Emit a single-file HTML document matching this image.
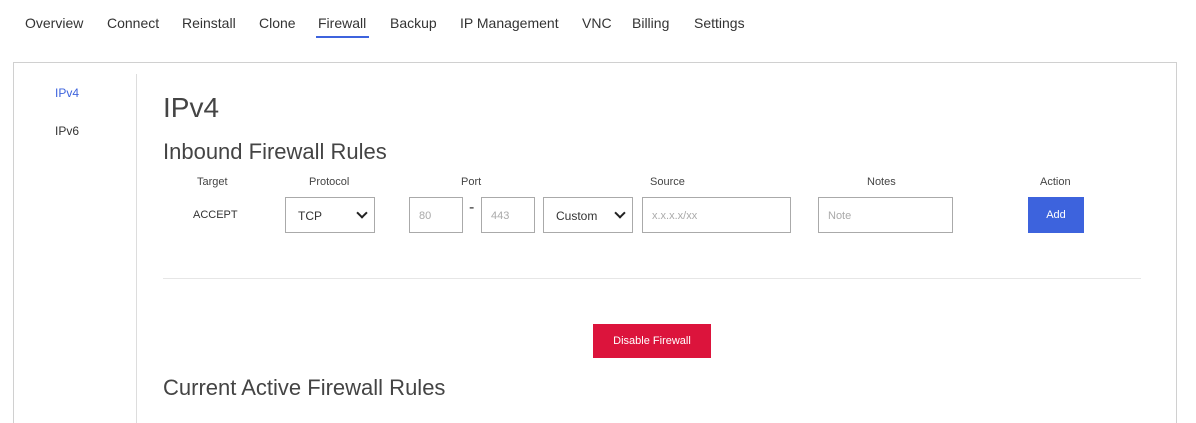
<!DOCTYPE html>
<html style="overflow:hidden;height:423px"><head><style>
*{box-sizing:border-box;margin:0;padding:0}
body{width:1196px;height:423px;background:#fff;font-family:"Liberation Sans",sans-serif;color:#333;position:relative;overflow:hidden}
.a{position:absolute;white-space:nowrap}
.nav{font-size:14px;color:#333;top:15px}
.box{position:absolute;border:1px solid #d0d0d0;background:#fff}
.lbl{font-size:11px;color:#444;top:175px}
.sel:after{content:"";position:absolute;right:8px;top:11px;width:6px;height:6px;border-right:2px solid #222;border-bottom:2px solid #222;transform:rotate(45deg)}
.ph{font-size:11px;color:#aaa}
</style></head><body>
<div class="a nav" style="left:25px">Overview</div>
<div class="a nav" style="left:107px">Connect</div>
<div class="a nav" style="left:182px">Reinstall</div>
<div class="a nav" style="left:259px">Clone</div>
<div class="a nav" style="left:318px">Firewall</div>
<div class="a" style="left:316px;top:36px;width:53px;height:2px;background:#3d63dd"></div>
<div class="a nav" style="left:390px">Backup</div>
<div class="a nav" style="left:460px">IP Management</div>
<div class="a nav" style="left:582px">VNC</div>
<div class="a nav" style="left:632px">Billing</div>
<div class="a nav" style="left:694px">Settings</div>

<div class="box" style="left:13px;top:62px;width:1164px;height:380px"></div>
<div class="a" style="left:136px;top:74px;width:1px;height:360px;background:#ddd"></div>
<div class="a" style="left:55px;top:86px;font-size:12px;color:#3d63dd">IPv4</div>
<div class="a" style="left:55px;top:124px;font-size:12px;color:#333">IPv6</div>
<div class="a" style="left:163px;top:92px;font-size:28px;color:#444">IPv4</div>
<div class="a" style="left:163px;top:139px;font-size:22px;color:#444">Inbound Firewall Rules</div>

<div class="a lbl" style="left:197px;top:176px">Target</div>
<div class="a lbl" style="left:309px;top:176px">Protocol</div>
<div class="a lbl" style="left:461px;top:176px">Port</div>
<div class="a lbl" style="left:650px;top:176px">Source</div>
<div class="a lbl" style="left:867px;top:176px">Notes</div>
<div class="a lbl" style="left:1040px;top:176px">Action</div>

<div class="a" style="left:193px;top:209px;font-size:11px;color:#333">ACCEPT</div>
<div class="box sel" style="left:285px;top:197px;width:90px;height:36px;border-color:#aaa"><span class="a" style="left:12px;top:11px;font-size:12px">TCP</span></div>
<div class="box" style="left:409px;top:197px;width:54px;height:36px;border-color:#aaa"><span class="a ph" style="left:9px;top:12px">80</span></div>
<div class="a" style="left:469px;top:199px;font-size:16px">-</div>
<div class="box" style="left:481px;top:197px;width:54px;height:36px;border-color:#aaa"><span class="a ph" style="left:9px;top:12px">443</span></div>
<div class="box sel" style="left:543px;top:197px;width:90px;height:36px;border-color:#aaa"><span class="a" style="left:12px;top:11px;font-size:12px">Custom</span></div>
<div class="box" style="left:642px;top:197px;width:149px;height:36px;border-color:#aaa"><span class="a ph" style="left:9px;top:12px">x.x.x.x/xx</span></div>
<div class="box" style="left:818px;top:197px;width:135px;height:36px;border-color:#aaa"><span class="a ph" style="left:9px;top:12px">Note</span></div>
<div class="a" style="left:1028px;top:197px;width:56px;height:36px;background:#3d63dd;color:#fff;font-size:11px;text-align:center;line-height:37px">Add</div>

<div class="a" style="left:163px;top:278px;width:978px;height:1px;background:#e6e6e6"></div>
<div class="a" style="left:593px;top:324px;width:118px;height:34px;background:#dc143c;color:#fff;font-size:11px;text-align:center;line-height:35px">Disable Firewall</div>
<div class="a" style="left:163px;top:375px;font-size:22px;color:#444">Current Active Firewall Rules</div>
</body></html>
